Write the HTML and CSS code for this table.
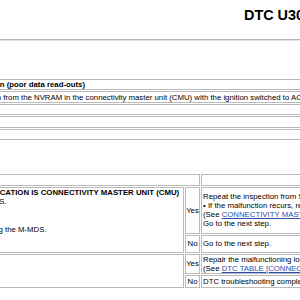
FILE: index.html
```html
<!DOCTYPE html>
<html lang="en">
<head>
<meta charset="utf-8">
<title>DTC U3000:00 [CONNECTIVITY MASTER UNIT (CMU)]</title>
<link rel="stylesheet" href="styles.css">
</head>
<body>
<div class="page">
  <h1 class="title">DTC U3000:00 [CONNECTIVITY MASTER UNIT (CMU)]</h1>
  <div class="rule"></div>

  <table class="spec">
    <colgroup><col class="c-label"><col></colgroup>
    <tr><th>Description</th><td class="strong">Connectivity master unit (CMU) system malfunction (poor data read-outs)</td></tr>
    <tr><th>Detection condition</th><td>An error is detected upon the read-out data acquisition from the NVRAM in the connectivity master unit (CMU) with the ignition switched to ACC or ON.</td></tr>
    <tr><th>Fail-safe function</th><td>&mdash;</td></tr>
    <tr><th>Vehicle status</th><td>&mdash;</td></tr>
    <tr><th>Possible cause</th><td>CMU malfunction</td></tr>
  </table>

  <h2 class="subhead">Diagnostic Procedure</h2>

  <table class="proc">
    <colgroup><col class="c-step"><col class="c-insp"><col class="c-res"><col></colgroup>
    <tr class="r-head"><th>STEP</th><th colspan="2">INSPECTION</th><th class="center">ACTION</th></tr>
    <tr class="r-yes1">
      <td rowspan="2" class="top">1</td>
      <td rowspan="2" class="top">
        <div class="strong nowrap">VERIFY THAT MALFUNCTION LOCATION IS CONNECTIVITY MASTER UNIT (CMU)</div>
        <div>&bull; Clear the DTC by using the M-MDS.</div>
        <div>&bull; Turn the ignition off.</div>
        <div>&bull; Wait for 5 s or more.</div>
        <div>&bull; Perform a DTC inspection by using the M-MDS.</div>
      </td>
      <td class="res">Yes</td>
      <td>Repeat the inspection from Step 1.<br>&bull; If the malfunction recurs, replace the connectivity master unit (CMU).<br>(See <a href="#cmu">CONNECTIVITY MASTER UNIT (CMU) REMOVAL/INSTALLATION</a>.)<br>Go to the next step.</td>
    </tr>
    <tr class="r-no1"><td class="res">No</td><td>Go to the next step.</td></tr>
    <tr class="r-yes2">
      <td rowspan="2" class="top">2</td>
      <td rowspan="2" class="top">
        <div class="strong">VERIFY OTHER DTCs</div>
        <div>&bull; Are any DTCs present?</div>
      </td>
      <td class="res">Yes</td>
      <td>Repair the malfunctioning location according to the applicable DTC troubleshooting.<br>(See <a href="#dtc">DTC TABLE [CONNECTIVITY MASTER UNIT (CMU)]</a>.)</td>
    </tr>
    <tr class="r-no2"><td class="res">No</td><td>DTC troubleshooting completed.</td></tr>
  </table>
</div>
</body>
</html>
```

FILE: styles.css
```css
body {
  margin: 0;
  background: #fff;
  color: #000;
  font-family: "Liberation Sans", Arial, sans-serif;
  font-size: 7.8px;
  line-height: 9.25px;
  overflow: hidden;
}

.page {
  width: 1000px;
  margin-left: -400px;
}

.title {
  margin: 0;
  padding: 7px 0 0 644px;
  font-size: 14.4px;
  line-height: 17px;
  font-weight: bold;
  white-space: nowrap;
}

.rule {
  margin-top: 15px;
  border-top: 1px solid #b4b4b4;
  border-bottom: 1px solid #e4e4e4;
}

table {
  width: 1000px;
  table-layout: fixed;
  border-collapse: separate;
  border-spacing: 1px;
}

th, td {
  border: 1px solid #bababa;
  padding: 0.1px 1px;
  text-align: left;
  vertical-align: middle;
  font-weight: normal;
}

.spec {
  margin-top: 37px;
}

.c-label { width: 209px; }

.subhead {
  margin: 0;
  padding: 12px 0 11px;
  font-size: 7.8px;
  line-height: 9px;
  font-weight: bold;
}

.c-step { width: 273px; }
.c-insp { width: 309px; }
.c-res { width: 15px; }

.center { text-align: center; }
.top { vertical-align: top; }
.strong { font-weight: bold; }
.nowrap { white-space: nowrap; }

.res { text-align: center; padding: 0; }

.r-yes1 { height: 47px; }
.r-no1 { height: 18px; }
.r-no2 { height: 12.5px; }

a {
  color: #2b4fae;
  text-decoration: underline;
}
```
